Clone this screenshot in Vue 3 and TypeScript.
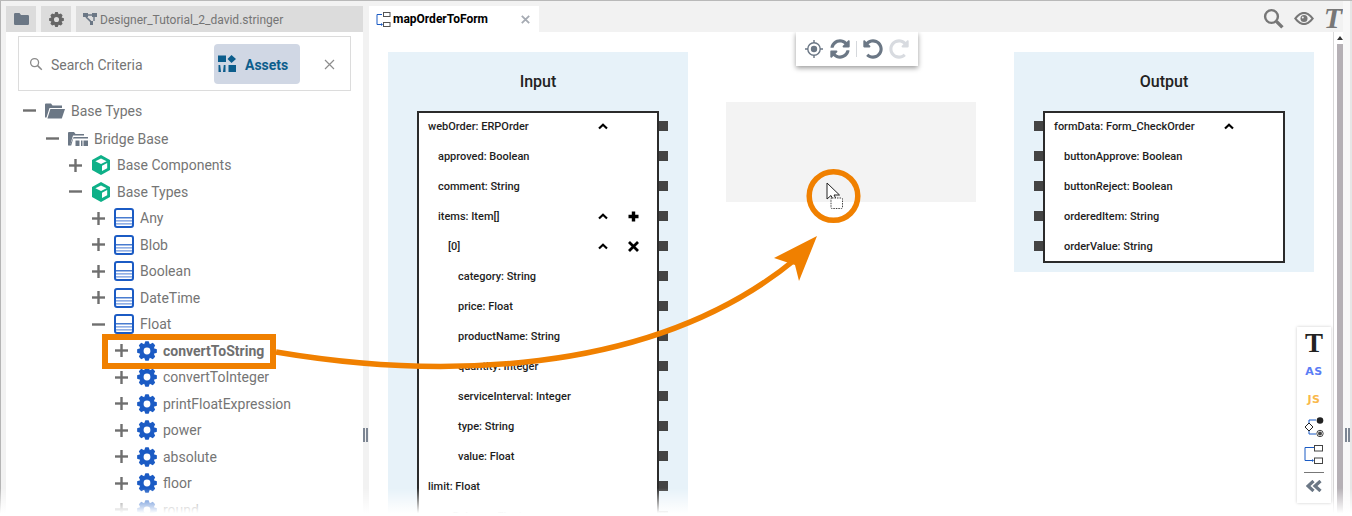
<script setup lang="ts">
interface TreeRow { label: string; level: number; open: boolean; icon: string; bold?: boolean }
interface PortRow { label: string; level: number; chevron?: boolean; action?: string }

const gear = (() => {
  const pts: string[] = []
  const teeth = 8
  for (let i = 0; i < teeth; i++) {
    const a = (i / teeth) * Math.PI * 2 - Math.PI / 2
    const s = Math.PI / teeth
    const p = (r: number, x: number) => `${(10 + r * Math.cos(a + x)).toFixed(2)} ${(10 + r * Math.sin(a + x)).toFixed(2)}`
    pts.push(i === 0 ? `M${p(7.4, -s)}` : `L${p(7.4, -s)}`)
    pts.push(`L${p(10, -s * 0.42)}`, `L${p(10, s * 0.42)}`, `L${p(7.4, s)}`)
  }
  return pts.join(' ') + 'Z M10 6.6a3.4 3.4 0 1 0 0 6.8a3.4 3.4 0 1 0 0-6.8Z'
})()

const tree: TreeRow[] = [
  { label: 'Base Types', level: 0, open: true, icon: 'folder' },
  { label: 'Bridge Base', level: 1, open: true, icon: 'bridge' },
  { label: 'Base Components', level: 2, open: false, icon: 'cube' },
  { label: 'Base Types', level: 2, open: true, icon: 'cube' },
  { label: 'Any', level: 3, open: false, icon: 'table' },
  { label: 'Blob', level: 3, open: false, icon: 'table' },
  { label: 'Boolean', level: 3, open: false, icon: 'table' },
  { label: 'DateTime', level: 3, open: false, icon: 'table' },
  { label: 'Float', level: 3, open: true, icon: 'table' },
  { label: 'convertToString', level: 4, open: false, icon: 'gear', bold: true },
  { label: 'convertToInteger', level: 4, open: false, icon: 'gear' },
  { label: 'printFloatExpression', level: 4, open: false, icon: 'gear' },
  { label: 'power', level: 4, open: false, icon: 'gear' },
  { label: 'absolute', level: 4, open: false, icon: 'gear' },
  { label: 'floor', level: 4, open: false, icon: 'gear' },
  { label: 'round', level: 4, open: false, icon: 'gear' },
]

const inputRows: PortRow[] = [
  { label: 'webOrder: ERPOrder', level: 0, chevron: true },
  { label: 'approved: Boolean', level: 1 },
  { label: 'comment: String', level: 1 },
  { label: 'items: Item[]', level: 1, chevron: true, action: 'plus' },
  { label: '[0]', level: 2, chevron: true, action: 'cross' },
  { label: 'category: String', level: 3 },
  { label: 'price: Float', level: 3 },
  { label: 'productName: String', level: 3 },
  { label: 'quantity: Integer', level: 3 },
  { label: 'serviceInterval: Integer', level: 3 },
  { label: 'type: String', level: 3 },
  { label: 'value: Float', level: 3 },
  { label: 'limit: Float', level: 0 },
  { label: 'openBalance: Float', level: 0 },
]

const outputRows: PortRow[] = [
  { label: 'formData: Form_CheckOrder', level: 0, chevron: true },
  { label: 'buttonApprove: Boolean', level: 1 },
  { label: 'buttonReject: Boolean', level: 1 },
  { label: 'orderedItem: String', level: 1 },
  { label: 'orderValue: String', level: 1 },
]

const syncPath = 'M370.72 133.28C339.458 104.008 298.888 87.962 255.848 88c-77.458.068-144.328 53.178-162.791 126.85-1.344 5.363-6.122 9.15-11.651 9.15H24.103c-7.498 0-13.194-6.807-11.807-14.176C33.933 94.924 134.813 8 256 8c66.448 0 126.791 26.136 171.315 68.685L463.03 40.97C478.149 25.851 504 36.559 504 57.941V192c0 13.255-10.745 24-24 24H345.941c-21.382 0-32.09-25.851-16.971-40.971l41.75-41.749zM32 296h134.059c21.382 0 32.09 25.851 16.971 40.971l-41.75 41.75c31.262 29.273 71.835 45.319 114.876 45.28 77.418-.07 144.315-53.144 162.787-126.849 1.344-5.363 6.122-9.15 11.651-9.15h57.304c7.498 0 13.194 6.807 11.807 14.176C478.067 417.076 377.187 504 256 504c-66.448 0-126.791-26.136-171.315-68.685L48.97 471.03C33.851 486.149 8 475.441 8 454.059V320c0-13.255 10.745-24 24-24z'
const undoPath = 'M255.545 8c-66.269.119-126.438 26.233-170.86 68.685L48.971 40.971C33.851 25.851 8 36.559 8 57.941V192c0 13.255 10.745 24 24 24h134.059c21.382 0 32.09-25.851 16.971-40.971l-41.75-41.75c30.864-28.899 70.801-44.907 113.23-45.273 92.398-.798 170.283 73.977 169.484 169.442C423.236 348.009 349.816 424 256 424c-41.127 0-79.997-14.678-110.63-41.556-4.743-4.161-11.906-3.908-16.368.553L89.34 422.659c-4.872 4.872-4.631 12.815.482 17.433C133.798 479.813 192.074 504 256 504c136.966 0 247.999-111.033 248-247.998C504.001 119.193 392.354 7.755 255.545 8z'
</script>

<template>
  <div class="app">
    <aside class="left">
      <div class="left-tabs">
        <div class="ltab small">
          <svg width="15" height="12" viewBox="0 0 15 12"><path d="M0 1.2Q0 0 1.2 0H5.5L7 2H13.8Q15 2 15 3.2V10.8Q15 12 13.8 12H1.2Q0 12 0 10.8Z" fill="#6b7785" /></svg>
        </div>
        <div class="ltab small">
          <svg width="15" height="15" viewBox="0 0 20 20"><path :d="gear" fill="#666" fill-rule="evenodd" /></svg>
        </div>
        <div class="ltab wide">
          <svg width="14" height="12" viewBox="0 0 14 12"><path d="M0 0H5V4H0ZM9 0H14V4H9ZM5 1.2H9V2.8H5ZM7 8H10V12H7Z" fill="#6b7785" /><path d="M3 4L7.6 8.4" stroke="#6b7785" stroke-width="1.6" /><path d="M11 4V8" stroke="#6b7785" stroke-width="1.4" /></svg>
          <span>Designer_Tutorial_2_david.stringer</span>
        </div>
      </div>
      <div class="left-body">
        <div class="search">
          <svg class="search-ico" width="14" height="14" viewBox="0 0 14 14"><circle cx="5.6" cy="5.6" r="4" fill="none" stroke="#8a8a8a" stroke-width="1.3" /><path d="M8.6 8.6L12.8 12.8" stroke="#8a8a8a" stroke-width="1.5" /></svg>
          <span class="search-text">Search Criteria</span>
          <div class="assets">
            <svg width="18" height="17" viewBox="0 0 18 17"><path d="M0 0.5H8V7H0ZM13.5 0L18 4L13.5 8L9.5 4ZM10.5 10H18V17H10.5ZM0.5 10H2.2L3 17H0.5ZM7.5 10H5.8L5 17H7.5Z" fill="#0c5d8c" /></svg>
            <span>Assets</span>
          </div>
          <svg class="search-x" width="11" height="11" viewBox="0 0 11 11"><path d="M1 1L10 10M10 1L1 10" stroke="#8d8d8d" stroke-width="1.2" /></svg>
        </div>
        <ul class="tree">
          <li v-for="(r, i) in tree" :key="i" class="node" :class="{ first: i === 0 }" :style="{ paddingLeft: 17 + r.level * 23 + 'px' }">
            <svg class="toggle" width="13" height="13" viewBox="0 0 13 13">
              <path d="M0 6.5H13" stroke="#6f6f6f" stroke-width="2.4" />
              <path v-if="!r.open" d="M6.5 0V13" stroke="#6f6f6f" stroke-width="2.4" />
            </svg>
            <svg class="nico" width="20" height="20" viewBox="0 0 20 20">
              <template v-if="r.icon === 'folder'">
                <path d="M0 3.5Q0 2.5 1 2.5H6L7.5 4.5H17V7H4.5L1.5 16.5H0Z" fill="#6b7785" />
                <path d="M5.4 8H20L16.8 17.5H2.4Z" fill="#6b7785" />
              </template>
              <template v-else-if="r.icon === 'bridge'">
                <path d="M0 4Q0 3 1 3H6L7.5 5H16V6.6H5L2 16.5H0Z" fill="#6b7785" />
                <path d="M5.6 8H20V9.6H5.2L3.2 16.5H1.6Z" fill="#6b7785" />
                <path d="M7.5 11.5H11.5V17H7.5ZM13 11.5H14.5V17H13ZM15.5 11.5H20V17H15.5Z" fill="#6b7785" />
              </template>
              <template v-else-if="r.icon === 'cube'">
                <path d="M10 0L19 4.9V15.1L10 20L1 15.1V4.9Z" fill="#0eb088" />
                <path d="M10 3.4L15.6 6.3L10 9.1L4.4 6.3Z" fill="#fff" />
                <path d="M11 10.7L16.2 8V13.2L11 16Z" fill="#fff" />
              </template>
              <template v-else-if="r.icon === 'table'">
                <rect x="1" y="1" width="18" height="18" rx="2" fill="#fff" stroke="#1b5bc4" stroke-width="2" />
                <path d="M2 9.8H18" stroke="#1b5bc4" stroke-width="1.2" />
                <path d="M2 12.8H18M2 15.8H18" stroke="#6f97de" stroke-width="1.2" />
              </template>
              <path v-else :d="gear" fill="#1b5bc4" fill-rule="evenodd" />
            </svg>
            <span class="nlabel" :class="{ bold: r.bold }">{{ r.label }}</span>
          </li>
        </ul>
      </div>
    </aside>

    <div class="splitter"><i></i><i></i></div>

    <main class="main">
      <div class="tabbar">
        <div class="tab">
          <svg width="15" height="15" viewBox="0 0 15 15"><path d="M6 2.5H1V12.5H5.5" fill="none" stroke="#1b5bc4" stroke-width="1" /><path d="M5 11L7 12.5L5 14Z" fill="#1b5bc4" /><rect x="7.5" y="0.5" width="6.5" height="4" fill="#fff" stroke="#555" /><rect x="7.5" y="10.5" width="6.5" height="4" fill="#fff" stroke="#555" /></svg>
          <span class="tab-title">mapOrderToForm</span>
          <svg width="9" height="9" viewBox="0 0 9 9"><path d="M0.8 0.8L8.2 8.2M8.2 0.8L0.8 8.2" stroke="#a6abb3" stroke-width="1.8" /></svg>
        </div>
        <div class="tools">
          <svg width="21" height="21" viewBox="0 0 21 21"><circle cx="8.5" cy="8.5" r="6.4" fill="none" stroke="#777" stroke-width="2.4" /><path d="M13.4 13.4L19.4 19.4" stroke="#777" stroke-width="3.4" /></svg>
          <svg width="20" height="13" viewBox="0 0 20 13"><path d="M0 6.5C4 1.3 7 0 10 0s6 1.3 10 6.5C16 11.7 13 13 10 13S4 11.7 0 6.5ZM2.6 6.5C5.3 9.8 7.6 11 10 11s4.7-1.2 7.4-4.5C14.7 3.2 12.4 2 10 2S5.3 3.2 2.6 6.5Z" fill="#777" /><circle cx="10" cy="6.5" r="3.5" fill="#777" /><circle cx="8.8" cy="5.5" r="1" fill="#f2f2f2" /></svg>
          <span class="tool-t">T</span>
        </div>
      </div>

      <div class="workspace">
        <div class="canvas">
          <section class="panel input">
            <h3>Input</h3>
            <div class="box">
              <div class="rows">
                <div v-for="(r, i) in inputRows" :key="i" class="row" :style="{ paddingLeft: 9 + r.level * 10 + 'px' }">
                  <span class="rlabel">{{ r.label }}</span>
                  <span class="cell">
                    <svg v-if="r.chevron" width="10" height="7" viewBox="0 0 10 7"><path d="M1 5.5L5 1.8L9 5.5" fill="none" stroke="#000" stroke-width="2.2" /></svg>
                  </span>
                  <span class="cell">
                    <svg v-if="r.action === 'plus'" width="11" height="11" viewBox="0 0 11 11"><path d="M0.5 5.5H10.5M5.5 0.5V10.5" stroke="#000" stroke-width="3.4" /></svg>
                    <svg v-if="r.action === 'cross'" width="11" height="11" viewBox="0 0 11 11"><path d="M1 1L10 10M10 1L1 10" stroke="#000" stroke-width="2.8" /></svg>
                  </span>
                  <i class="port right"></i>
                </div>
              </div>
            </div>
          </section>

          <section class="drop"></section>

          <section class="panel output">
            <h3>Output</h3>
            <div class="box">
              <div class="rows">
                <div v-for="(r, i) in outputRows" :key="i" class="row" :style="{ paddingLeft: 9 + r.level * 10 + 'px' }">
                  <span class="rlabel">{{ r.label }}</span>
                  <span class="cell">
                    <svg v-if="r.chevron" width="10" height="7" viewBox="0 0 10 7"><path d="M1 5.5L5 1.8L9 5.5" fill="none" stroke="#000" stroke-width="2.2" /></svg>
                  </span>
                  <span class="cell"></span>
                  <i class="port leftp"></i>
                </div>
              </div>
            </div>
          </section>

          <div class="toolbar">
            <svg width="18" height="18" viewBox="0 0 18 18"><circle cx="9" cy="9" r="6.2" fill="none" stroke="#6b7785" stroke-width="1.4" /><circle cx="9" cy="9" r="3.2" fill="#6b7785" /><path d="M9 0V3M9 15V18M0 9H3M15 9H18" stroke="#6b7785" stroke-width="1.4" /></svg>
            <svg class="t-sync" width="20" height="20" viewBox="0 0 512 512"><path :d="syncPath" fill="#6b7785" /></svg>
            <span class="tsep"></span>
            <svg width="20" height="20" viewBox="0 0 512 512"><path :d="undoPath" fill="#6b7785" /></svg>
            <svg class="flip" width="20" height="20" viewBox="0 0 512 512"><path :d="undoPath" fill="#d8dbe0" /></svg>
          </div>
        </div>
        <div class="scroll">
          <svg width="6" height="4" viewBox="0 0 6 4"><path d="M3 0L6 4H0Z" fill="#333" /></svg>
          <div class="thumb"></div>
        </div>
      </div>
    </main>

    <div class="rstrip"><i></i><i></i></div>

    <div class="fade"></div>

    <div class="palette">
      <span class="p-t">T</span>
      <span class="p-as">AS</span>
      <span class="p-js">JS</span>
      <svg class="p-flow" width="20" height="20" viewBox="0 0 20 20"><path d="M5 6V3H12M5 14V17H12" fill="none" stroke="#1b5bc4" stroke-width="1" /><path d="M5 6L9 10L5 14L1 10Z" fill="#fff" stroke="#222" stroke-width="1" /><circle cx="16" cy="3.5" r="3.3" fill="#222" /><circle cx="16" cy="16.5" r="3.2" fill="#fff" stroke="#444" stroke-width="1" /><circle cx="16" cy="16.5" r="2" fill="#444" /></svg>
      <svg class="p-map" width="20" height="19" viewBox="0 0 20 19"><path d="M10 2.5H1V15.5H9" fill="none" stroke="#1b5bc4" stroke-width="1" /><path d="M8 14L10 15.5L8 17Z" fill="#1b5bc4" /><rect x="10.5" y="0.5" width="8" height="5.5" fill="#fff" stroke="#444" /><rect x="10.5" y="13" width="8" height="5.5" fill="#fff" stroke="#444" /></svg>
      <span class="p-line"></span>
      <svg width="16" height="12" viewBox="0 0 16 12"><path d="M7.5 1L2 6L7.5 11M14.5 1L9 6L14.5 11" fill="none" stroke="#6b7785" stroke-width="3.2" /></svg>
    </div>

    <svg class="anno" width="1352" height="516" viewBox="0 0 1352 516">
      <rect x="105" y="337" width="168" height="29" fill="none" stroke="#f08000" stroke-width="6" />
      <path d="M276 352C430 378 650 380 797 258" fill="none" stroke="#f08000" stroke-width="5.5" />
      <path d="M817 236L774 258L795 265L799 281Z" fill="#f08000" />
      <circle cx="833.5" cy="196" r="24.3" fill="none" stroke="#f08000" stroke-width="5.5" />
      <path d="M827 183V199L831 195.5L834 202L837 200.5L834 195L839.5 195Z" fill="#fff" stroke="#222" stroke-width="1" />
      <rect x="831" y="198" width="11.5" height="10.5" rx="1" fill="#fff" stroke="#444" stroke-width="1" stroke-dasharray="1.5 1" />
    </svg>
  </div>
</template>

<style>
html, body { margin: 0; overflow: hidden; background: #fff; }
</style>

<style scoped>
.app {
  position: relative;
  display: flex;
  width: 1352px;
  height: 516px;
  box-sizing: border-box;
  border-top: 1px solid #b9b9b9;
  overflow: hidden;
  background: #f2f2f2;
  font-family: Roboto, "Liberation Sans", sans-serif;
}
.left {
  width: 363px;
  box-sizing: border-box;
  flex: none;
  border-left: 1px solid #b5b5b5;
  padding: 5px 0 0 5px;
  display: flex;
  flex-direction: column;
}
.left-tabs { display: flex; gap: 5px; height: 26px; flex: none; }
.ltab { background: #dcdcdc; display: flex; align-items: center; justify-content: center; height: 26px; }
.ltab.small { width: 30px; }
.ltab.wide { flex: 1; justify-content: flex-start; padding-left: 7px; gap: 3px; font-size: 12px; color: #757575; }
.ltab.wide span { padding-top: 1px; }
.left-body { flex: 1; background: #fff; padding: 4px 12px 0; }
.search {
  height: 55px;
  box-sizing: border-box;
  border: 1px solid #dcdcdc;
  display: flex;
  align-items: center;
  padding-left: 10px;
}
.search-ico { margin-right: 8px; }
.search-text { font-size: 14px; color: #757575; width: 163px; padding-top: 2px; }
.assets {
  width: 86px;
  height: 40px;
  background: #d0d7e4;
  border-radius: 4px;
  display: flex;
  align-items: center;
  padding-left: 4px;
  box-sizing: border-box;
  gap: 9px;
  font-size: 14px;
  font-weight: 700;
  color: #0c5d8c;
}
.assets span { padding-top: 2px; }
.search-x { margin-left: 24px; margin-top: 2px; }
.tree { list-style: none; margin: 6.6px 0 0 -6px; padding: 0; }
.node { display: flex; align-items: center; height: 26.5px; box-sizing: border-box; margin-left: -6px; }
.node.first { margin-bottom: 1.5px; }
.toggle { flex: none; margin-right: 9px; }
.nico { flex: none; margin-right: 6px; }
.nlabel { font-size: 14px; color: #757575; white-space: nowrap; }
.nlabel.bold { font-weight: 700; color: #6f6f6f; }

.splitter {
  width: 6px;
  flex: none;
  display: flex;
  gap: 1px;
  padding-top: 427px;
  box-sizing: border-box;
}
.splitter i, .rstrip i { display: block; width: 2px; height: 14px; background: #7d8693; }

.main { width: 974px; flex: none; display: flex; flex-direction: column; }
.tabbar { height: 31px; flex: none; display: flex; justify-content: space-between; box-sizing: border-box; padding-top: 5px; }
.tab {
  width: 170px;
  height: 26px;
  background: #fff;
  display: flex;
  align-items: center;
  box-sizing: border-box;
  padding-left: 7px;
}
.tab-title { font-size: 12px; font-weight: 700; color: #000; margin: 0 33px 0 2px; white-space: nowrap; width: 95px; }
.tools { display: flex; align-items: center; gap: 10px; height: 26px; margin-top: -1px; margin-right: 1px; }
.tool-t { font-family: "Liberation Serif", serif; font-style: italic; font-weight: 700; font-size: 30px; line-height: 26px; color: #777; }
.workspace { flex: 1; display: flex; background: #fff; min-height: 0; }
.canvas { position: relative; width: 964px; flex: none; box-sizing: border-box; padding: 20px 0 0 19px; display: flex; align-items: flex-start; overflow: hidden; }
.panel { width: 300px; flex: none; background: #e7f2f9; box-sizing: border-box; padding: 0 29px; }
.panel h3 { margin: 0; height: 59px; line-height: 60px; text-align: center; font-size: 16px; font-weight: 500; color: #222; }
.panel.input { height: 500px; }
.panel.output { height: 220px; margin-left: 38px; }
.drop { width: 250px; height: 100px; margin: 50px 0 0 38px; background: #f3f3f3; flex: none; }
.box { border: 2px solid #2b2b2b; background: #fff; box-sizing: border-box; width: 242px; }
.rows { margin-top: -2px; }
.row { position: relative; display: flex; align-items: center; height: 30px; box-sizing: border-box; padding-right: 9px; }
.rlabel { flex: 1; font-size: 11px; font-weight: 500; color: #1e1e1e; white-space: nowrap; }
.cell { width: 30px; flex: none; display: flex; align-items: center; justify-content: center; }
.port { position: absolute; top: 10px; width: 9px; height: 10px; background: #444; }
.port.right { right: -11px; }
.port.leftp { left: -11px; }
.toolbar {
  position: absolute;
  left: 427px;
  top: 0;
  width: 122px;
  height: 34px;
  background: #fff;
  box-shadow: 0 2px 5px rgba(0, 0, 0, 0.4);
  display: flex;
  align-items: center;
  box-sizing: border-box;
  padding-left: 9px;
  gap: 6px;
}
.t-sync { margin-left: 1px; }
.tsep { width: 1px; height: 16px; background: #d5d8dc; flex: none; }
.flip { transform: scaleX(-1); }
.scroll { width: 10px; flex: none; border-left: 1px solid #d8d8d8; box-sizing: border-box; background: #fff; padding-left: 3px; display: flex; flex-direction: column; padding-top: 4px; }
.thumb { margin-top: 4px; width: 6px; flex: 1; background: #b5b0b5; }

.rstrip {
  flex: 1;
  display: flex;
  gap: 1px;
  padding: 427px 0 0 2px;
  background: linear-gradient(90deg, #f8f8f8 7px, #e6e6e6 7px);
  box-sizing: border-box;
}

.fade {
  position: absolute;
  left: 0;
  right: 0;
  bottom: 0;
  height: 28px;
  background: linear-gradient(rgba(255, 255, 255, 0), #fff 90%);
}
.palette {
  position: absolute;
  left: 1297px;
  top: 326px;
  width: 34px;
  height: 176px;
  background: #fff;
  box-shadow: 0 0 3px rgba(0, 0, 0, 0.2);
  display: flex;
  flex-direction: column;
  align-items: center;
  box-sizing: border-box;
}
.p-t { font-family: "Liberation Serif", serif; font-weight: 700; font-size: 27px; line-height: 30px; height: 30px; margin-top: 1px; color: #222; }
.p-as, .p-js { font-family: "DejaVu Sans", sans-serif; font-weight: 700; font-size: 11px; letter-spacing: 0.6px; height: 28px; line-height: 28px; }
.p-as { color: #5a7df5; }
.p-js { color: #f9b84a; }
.p-flow { margin-top: 3px; flex: none; }
.p-map { margin-top: 8px; flex: none; }
.p-line { width: 20px; height: 1px; background: #777; margin: 8px 0 7px; flex: none; }
.anno { position: absolute; left: 0; top: -1px; pointer-events: none; }
</style>
